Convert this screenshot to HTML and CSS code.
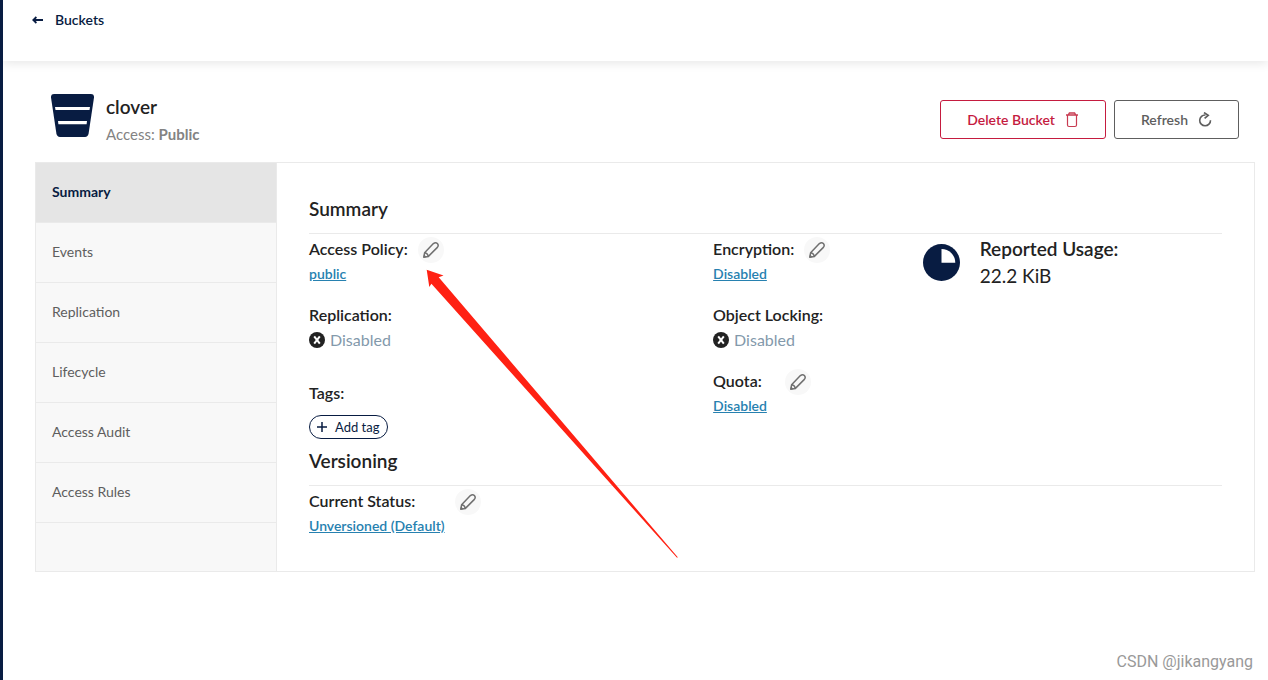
FILE: index.html
```html
<!DOCTYPE html>
<html lang="en">
<head>
    <meta charset="UTF-8">
    <meta name="viewport" content="width=device-width, initial-scale=1.0">
    <title>clover - Buckets</title>
    <link rel="stylesheet" href="styles.css">
</head>

<body>

    <!-- shared icons -->
    <svg class="sprite" aria-hidden="true">
        <symbol id="pencil" viewBox="0 0 18 18">
            <path d="M1.8 16.2 L2.6 11.8 L11.4 2.6 Q13.6 .8 15.4 2.5 Q17 4.3 15.4 6.4 L6.4 15.4 Z M2.8 11.8 Q5.6 12.2 6.2 15.2" fill="none" stroke="#707070" stroke-width="1.5" stroke-linejoin="round"/>
            <path d="M1.4 16.6 L2 13.4 L4.6 16 Z" fill="#707070"/>
        </symbol>
        <symbol id="disabled" viewBox="0 0 16 16">
            <circle cx="8" cy="8" r="8" fill="#222"/>
            <path d="M5.2 4.4 L10.8 11.6 M10.8 4.4 L5.2 11.6" stroke="#fff" stroke-width="2"/>
        </symbol>
    </svg>

    <header class="topbar">
        <a class="back" href="#">
            <svg width="12" height="8" viewBox="0 0 12 8" aria-hidden="true">
                <path d="M1 4 H11 M4.4 1 L1.2 4 L4.4 7" fill="none" stroke="#081c42" stroke-width="1.8"/>
            </svg>
            Buckets
        </a>
    </header>

    <main class="page">
        <div class="bucket-header">
            <svg width="43" height="43" viewBox="0 0 43 43" aria-hidden="true">
                <path d="M3 0 H40 Q43.4 0 43 3.5 L37.6 39.6 Q37 43 34 43 H9 Q6 43 5.4 39.6 L0 3.5 Q-.4 0 3 0 Z" fill="#081c42"/>
                <path d="M4 13 H39 L38.5 16 H4.5 Z M7 27 H36 L35.6 30.3 H7.4 Z" fill="#fff"/>
            </svg>
            <div class="bucket-name">
                <h1>clover</h1>
                <p>Access: <strong>Public</strong></p>
            </div>
            <div class="actions">
                <button type="button" class="btn btn-delete">
                    Delete Bucket
                    <svg width="14" height="16" viewBox="0 0 14 16" fill="none" stroke="#c83b51" aria-hidden="true">
                        <path d="M1 3 H13 M3.5 2.5 L4.4 1 H9.6 L10.5 2.5" stroke-width="1.4"/>
                        <path d="M2.5 3 V13 Q2.5 14.5 4 14.5 H10 Q11.5 14.5 11.5 13 V3" stroke-width="1.2"/>
                    </svg>
                </button>
                <button type="button" class="btn">
                    Refresh
                    <svg width="14" height="16" viewBox="0 0 14 16" aria-hidden="true">
                        <path d="M7.5 3 A5.4 5.4 0 1 0 12.5 8.2" fill="none" stroke="#5e5e5e" stroke-width="1.6"/>
                        <path d="M6 .6 L10.2 3.4 L6.6 6.4" fill="none" stroke="#5e5e5e" stroke-width="1.7"/>
                    </svg>
                </button>
            </div>
        </div>

        <div class="panel">
            <nav class="tabs">
                <a class="active" href="#">Summary</a>
                <a href="#">Events</a>
                <a href="#">Replication</a>
                <a href="#">Lifecycle</a>
                <a href="#">Access Audit</a>
                <a href="#">Access Rules</a>
            </nav>

            <div class="content">
                <h2>Summary</h2>
                <div class="summary">
                    <div class="column">
                        <div class="item">
                            <span class="label">Access Policy:</span>
                            <button type="button" class="edit" aria-label="Edit access policy"><svg width="18" height="18"><use href="#pencil"/></svg></button>
                            <a class="value" href="#">public</a>
                        </div>
                        <div class="item">
                            <span class="label">Replication:</span>
                            <span class="value off"><svg width="16" height="16"><use href="#disabled"/></svg>Disabled</span>
                        </div>
                        <div class="item tags">
                            <span class="label">Tags:</span>
                            <button type="button" class="add-tag">
                                <svg width="12" height="12" viewBox="0 0 12 12" aria-hidden="true"><path d="M6 1 V11 M1 6 H11" stroke="#081c42" stroke-width="1.5"/></svg>
                                Add tag
                            </button>
                        </div>
                    </div>

                    <div class="column">
                        <div class="item">
                            <span class="label">Encryption:</span>
                            <button type="button" class="edit" aria-label="Edit encryption"><svg width="18" height="18"><use href="#pencil"/></svg></button>
                            <a class="value" href="#">Disabled</a>
                        </div>
                        <div class="item">
                            <span class="label">Object Locking:</span>
                            <span class="value off"><svg width="16" height="16"><use href="#disabled"/></svg>Disabled</span>
                        </div>
                        <div class="item">
                            <span class="label">Quota:</span>
                            <button type="button" class="edit" aria-label="Edit quota"><svg width="18" height="18"><use href="#pencil"/></svg></button>
                            <a class="value" href="#">Disabled</a>
                        </div>
                    </div>

                    <div class="usage">
                        <svg width="37" height="37" viewBox="0 0 37 37" aria-hidden="true">
                            <circle cx="18.5" cy="18.5" r="18.5" fill="#081c42"/>
                            <path d="M18.5 5 A13.8 13.8 0 0 1 32.3 18.8 H18.5 Z" fill="#fff"/>
                        </svg>
                        <div>
                            <strong>Reported Usage:</strong>
                            <span>22.2 KiB</span>
                        </div>
                    </div>
                </div>

                <h2>Versioning</h2>
                <div class="item">
                    <span class="label">Current Status:</span>
                    <button type="button" class="edit" aria-label="Edit versioning"><svg width="18" height="18"><use href="#pencil"/></svg></button>
                    <a class="value" href="#">Unversioned (Default)</a>
                </div>
            </div>
        </div>
    </main>

    <svg class="pointer" width="252" height="290" viewBox="0 0 252 290" aria-hidden="true">
        <path d="M.7 .7 L17.5 6.4 L12.7 8.2 L251.8 288.3 L251 288.8 L5.4 14.8 L3.3 18 Z" fill="#ff2113"/>
    </svg>

    <p class="watermark">CSDN @jikangyang</p>

</body>

</html>
```
FILE: styles.css
```css
* {
    margin: 0;
    padding: 0;
    box-sizing: border-box;
}

body {
    min-height: 100vh;
    border-left: 3px solid #081c42;
    background-color: #fff;
    color: #222;
    font-family: Lato, sans-serif;
    font-size: 14px;
}

button {
    font-family: inherit;
    cursor: pointer;
}

.sprite {
    position: absolute;
    width: 0;
    height: 0;
}

.topbar {
    height: 61px;
    padding: 10px 29px;
    box-shadow: 0 2px 10px rgba(0, 0, 0, 0.1);
}

.back {
    display: inline-flex;
    align-items: center;
    gap: 11px;
    color: #081c42;
    font-weight: 600;
    line-height: 20px;
    text-decoration: none;
}

.page {
    padding: 33px 13px 0 32px;
}

.bucket-header {
    display: flex;
    align-items: flex-start;
    gap: 12px;
    height: 68px;
    padding: 0 16px;
}

.bucket-name h1 {
    font-size: 19px;
    font-weight: 600;
    line-height: 26px;
}

.bucket-name p {
    color: #838383;
    font-size: 15px;
    line-height: 28px;
}

.actions {
    display: flex;
    gap: 8px;
    margin: 6px 0 0 auto;
}

.btn {
    display: flex;
    align-items: center;
    gap: 10px;
    height: 39px;
    padding: 0 26px;
    border: 1px solid #5e5e5e;
    border-radius: 3px;
    background-color: #fff;
    color: #5e5e5e;
    font-size: 14px;
    font-weight: 600;
}

.btn-delete {
    border-color: #c51b3f;
    color: #c51b3f;
}

.panel {
    display: flex;
    min-height: 410px;
    border: 1px solid #eaeaea;
}

.tabs {
    flex: 0 0 241px;
    border-right: 1px solid #eaeaea;
    background-color: #f8f8f8;
}

.tabs a {
    display: block;
    height: 60px;
    padding: 0 16px;
    border-bottom: 1px solid #eaeaea;
    color: #5e5e5e;
    line-height: 57px;
    text-decoration: none;
}

.tabs .active {
    background-color: #e5e5e5;
    color: #081c42;
    font-weight: 700;
}

.content {
    flex: 1;
    padding: 24px 32px;
}

h2 {
    height: 47px;
    margin-bottom: 3px;
    border-bottom: 1px solid #eaeaea;
    font-size: 19px;
    font-weight: 600;
    line-height: 44px;
}

.summary {
    display: grid;
    grid-template-columns: 27fr 14fr 20fr;
}

.column {
    display: flex;
    flex-direction: column;
    gap: 18px;
}

.item {
    display: grid;
    grid-template-columns: auto auto;
    grid-template-rows: 26px auto;
    justify-content: start;
    column-gap: 10px;
}

.label {
    min-width: 62px;
    font-size: 16px;
    font-weight: 600;
    line-height: 24px;
}

.edit {
    display: flex;
    align-items: center;
    justify-content: center;
    width: 26px;
    height: 26px;
    border: none;
    border-radius: 50%;
    background-color: #f8f8f8;
}

.value {
    grid-column: 1;
    color: #2781b0;
    font-weight: 600;
    line-height: 22px;
}

.off {
    display: flex;
    align-items: center;
    gap: 5px;
    color: #8399ab;
    font-size: 16px;
    font-weight: 400;
}

.tags {
    padding: 12px 0 0;
}

.add-tag {
    display: flex;
    grid-column: 1;
    align-items: center;
    gap: 7px;
    height: 24px;
    margin: 8px 0 0;
    padding: 0 8px 0 6px;
    border: 1px solid #081c42;
    border-radius: 12px;
    background-color: #fff;
    color: #081c42;
    font-size: 13px;
}

.usage {
    display: flex;
    align-items: flex-start;
    gap: 20px;
}

.usage svg {
    margin-top: 7px;
}

.usage strong,
.usage span {
    display: block;
    font-size: 19px;
    line-height: 32px;
}

.usage strong {
    font-weight: 600;
    line-height: 23px;
}

.pointer {
    position: absolute;
    top: 269px;
    left: 426px;
    pointer-events: none;
}

.watermark {
    position: absolute;
    right: 15px;
    bottom: 9px;
    color: #999;
    font-family: Roboto, sans-serif;
    font-size: 16px;
}
```
